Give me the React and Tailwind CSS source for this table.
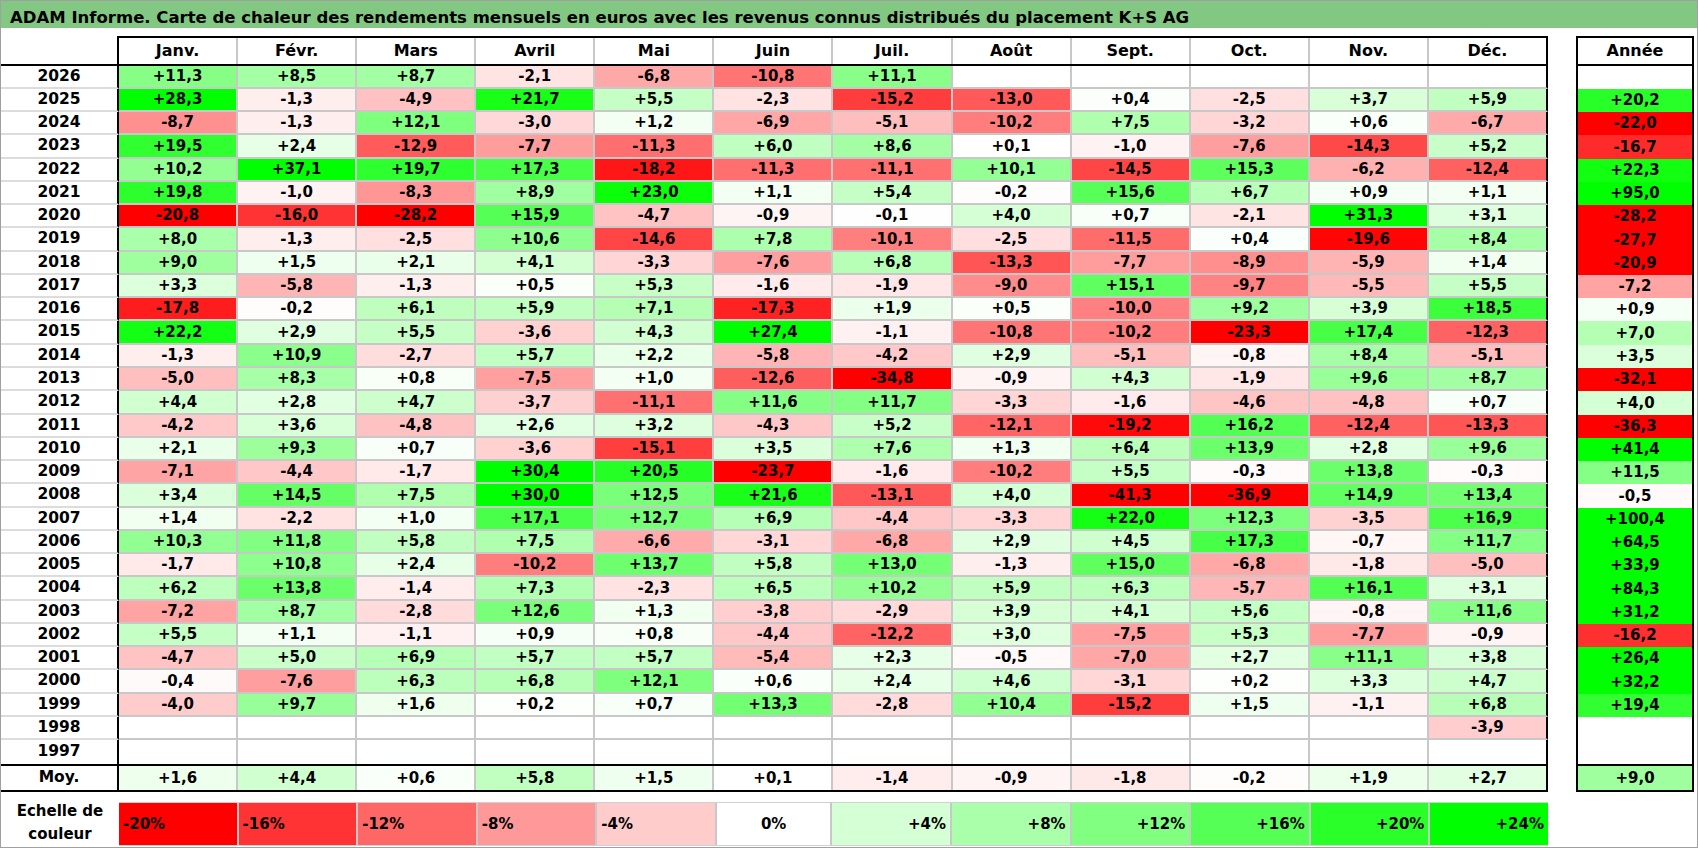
import React from 'react';

const MONTHS = ['Janv.', 'Févr.', 'Mars', 'Avril', 'Mai', 'Juin', 'Juil.', 'Août', 'Sept.', 'Oct.', 'Nov.', 'Déc.'];

// year, 12 monthly values ('.' = empty), yearly value
const ROWS = [
  ['2026', '+11,3 +8,5 +8,7 -2,1 -6,8 -10,8 +11,1 . . . . .', '.'],
  ['2025', '+28,3 -1,3 -4,9 +21,7 +5,5 -2,3 -15,2 -13,0 +0,4 -2,5 +3,7 +5,9', '+20,2'],
  ['2024', '-8,7 -1,3 +12,1 -3,0 +1,2 -6,9 -5,1 -10,2 +7,5 -3,2 +0,6 -6,7', '-22,0'],
  ['2023', '+19,5 +2,4 -12,9 -7,7 -11,3 +6,0 +8,6 +0,1 -1,0 -7,6 -14,3 +5,2', '-16,7'],
  ['2022', '+10,2 +37,1 +19,7 +17,3 -18,2 -11,3 -11,1 +10,1 -14,5 +15,3 -6,2 -12,4', '+22,3'],
  ['2021', '+19,8 -1,0 -8,3 +8,9 +23,0 +1,1 +5,4 -0,2 +15,6 +6,7 +0,9 +1,1', '+95,0'],
  ['2020', '-20,8 -16,0 -28,2 +15,9 -4,7 -0,9 -0,1 +4,0 +0,7 -2,1 +31,3 +3,1', '-28,2'],
  ['2019', '+8,0 -1,3 -2,5 +10,6 -14,6 +7,8 -10,1 -2,5 -11,5 +0,4 -19,6 +8,4', '-27,7'],
  ['2018', '+9,0 +1,5 +2,1 +4,1 -3,3 -7,6 +6,8 -13,3 -7,7 -8,9 -5,9 +1,4', '-20,9'],
  ['2017', '+3,3 -5,8 -1,3 +0,5 +5,3 -1,6 -1,9 -9,0 +15,1 -9,7 -5,5 +5,5', '-7,2'],
  ['2016', '-17,8 -0,2 +6,1 +5,9 +7,1 -17,3 +1,9 +0,5 -10,0 +9,2 +3,9 +18,5', '+0,9'],
  ['2015', '+22,2 +2,9 +5,5 -3,6 +4,3 +27,4 -1,1 -10,8 -10,2 -23,3 +17,4 -12,3', '+7,0'],
  ['2014', '-1,3 +10,9 -2,7 +5,7 +2,2 -5,8 -4,2 +2,9 -5,1 -0,8 +8,4 -5,1', '+3,5'],
  ['2013', '-5,0 +8,3 +0,8 -7,5 +1,0 -12,6 -34,8 -0,9 +4,3 -1,9 +9,6 +8,7', '-32,1'],
  ['2012', '+4,4 +2,8 +4,7 -3,7 -11,1 +11,6 +11,7 -3,3 -1,6 -4,6 -4,8 +0,7', '+4,0'],
  ['2011', '-4,2 +3,6 -4,8 +2,6 +3,2 -4,3 +5,2 -12,1 -19,2 +16,2 -12,4 -13,3', '-36,3'],
  ['2010', '+2,1 +9,3 +0,7 -3,6 -15,1 +3,5 +7,6 +1,3 +6,4 +13,9 +2,8 +9,6', '+41,4'],
  ['2009', '-7,1 -4,4 -1,7 +30,4 +20,5 -23,7 -1,6 -10,2 +5,5 -0,3 +13,8 -0,3', '+11,5'],
  ['2008', '+3,4 +14,5 +7,5 +30,0 +12,5 +21,6 -13,1 +4,0 -41,3 -36,9 +14,9 +13,4', '-0,5'],
  ['2007', '+1,4 -2,2 +1,0 +17,1 +12,7 +6,9 -4,4 -3,3 +22,0 +12,3 -3,5 +16,9', '+100,4'],
  ['2006', '+10,3 +11,8 +5,8 +7,5 -6,6 -3,1 -6,8 +2,9 +4,5 +17,3 -0,7 +11,7', '+64,5'],
  ['2005', '-1,7 +10,8 +2,4 -10,2 +13,7 +5,8 +13,0 -1,3 +15,0 -6,8 -1,8 -5,0', '+33,9'],
  ['2004', '+6,2 +13,8 -1,4 +7,3 -2,3 +6,5 +10,2 +5,9 +6,3 -5,7 +16,1 +3,1', '+84,3'],
  ['2003', '-7,2 +8,7 -2,8 +12,6 +1,3 -3,8 -2,9 +3,9 +4,1 +5,6 -0,8 +11,6', '+31,2'],
  ['2002', '+5,5 +1,1 -1,1 +0,9 +0,8 -4,4 -12,2 +3,0 -7,5 +5,3 -7,7 -0,9', '-16,2'],
  ['2001', '-4,7 +5,0 +6,9 +5,7 +5,7 -5,4 +2,3 -0,5 -7,0 +2,7 +11,1 +3,8', '+26,4'],
  ['2000', '-0,4 -7,6 +6,3 +6,8 +12,1 +0,6 +2,4 +4,6 -3,1 +0,2 +3,3 +4,7', '+32,2'],
  ['1999', '-4,0 +9,7 +1,6 +0,2 +0,7 +13,3 -2,8 +10,4 -15,2 +1,5 -1,1 +6,8', '+19,4'],
  ['1998', '. . . . . . . . . . . -3,9', '.'],
  ['1997', '. . . . . . . . . . . .', '.'],
];

const AVG = '+1,6 +4,4 +0,6 +5,8 +1,5 +0,1 -1,4 -0,9 -1,8 -0,2 +1,9 +2,7'.split(' ');
const AVG_YEAR = '+9,0';

const SCALE = [-20, -16, -12, -8, -4, 0, 4, 8, 12, 16, 20, 24];

// white -> red down to -20, white -> green up to +24
function heat(v) {
  if (v === null || Number.isNaN(v)) return '#ffffff';
  if (v < 0) {
    const c = Math.round(255 * (1 - Math.min(-v / 20, 1)));
    return `rgb(255,${c},${c})`;
  }
  const c = Math.round(255 * (1 - Math.min(v / 24, 1)));
  return `rgb(${c},255,${c})`;
}

const num = (s) => (s === '.' ? null : parseFloat(s.replace(',', '.')));

// 30 rows share 698px, some get 24px and the rest 23px
const rowH = (i) =>
  Math.floor(((i + 1) * 698) / 30) - Math.floor((i * 698) / 30) === 24 ? 'h-[24px]' : 'h-[23px]';

function Cell({ value, last, bottom }) {
  return (
    <div
      className={`flex-1 flex items-center justify-center text-[15px] ${
        last ? 'border-r-2 border-r-black' : 'border-r-2 border-r-[#c8c8c8]'
      } ${bottom ? 'border-b-2 border-b-[#c8c8c8]' : ''}`}
      style={{ backgroundColor: heat(num(value)) }}
    >
      {value === '.' ? '' : value}
    </div>
  );
}

export default function App() {
  return (
    <div className="w-[1698px] h-[848px] border border-[#a0a0a0] bg-white text-black font-bold [font-family:'DejaVu_Sans','Liberation_Sans',sans-serif] flex flex-col">
      <div className="h-[27px] bg-[#82c882] pl-[9px] pt-[9px] text-[16.5px] leading-[16px] whitespace-nowrap">
        ADAM Informe. Carte de chaleur des rendements mensuels en euros avec les revenus connus distribués du placement K+S AG
      </div>

      <div className="flex mt-[8px]">
        {/* monthly table */}
        <div className="w-[1547px] flex flex-col">
          <div className="flex h-[30px] border-b-2 border-black">
            <div className="w-[118px] border-r-2 border-black" />
            <div className="flex flex-1 border-t-2 border-r-2 border-black">
              {MONTHS.map((m, i) => (
                <div
                  key={m}
                  className={`flex-1 flex items-center justify-center text-[16px] ${
                    i < 11 ? 'border-r-2 border-[#c8c8c8]' : ''
                  }`}
                >
                  {m}
                </div>
              ))}
            </div>
          </div>

          {ROWS.map(([year, vals], i) => {
            const cells = vals.split(' ');
            const bottom = i < ROWS.length - 1;
            return (
              <div key={year} className={`flex ${rowH(i)}`}>
                <div
                  className={`w-[118px] flex items-center justify-center text-[15.5px] border-r-2 border-r-black ${
                    bottom ? 'border-b-2 border-b-[#dcdcdc]' : ''
                  }`}
                >
                  {year}
                </div>
                {cells.map((c, j) => (
                  <Cell key={j} value={c} last={j === 11} bottom={bottom} />
                ))}
              </div>
            );
          })}

          <div className="flex h-[28px] border-t-2 border-b-2 border-black">
            <div className="w-[118px] flex items-center justify-center text-[15.5px] border-r-2 border-black">
              Moy.
            </div>
            {AVG.map((c, j) => (
              <Cell key={j} value={c} last={j === 11} />
            ))}
          </div>
        </div>

        {/* yearly column */}
        <div className="ml-[28px] w-[118px] border-2 border-black flex flex-col">
          <div className="h-[28px] border-b-2 border-black flex items-center justify-center text-[16px]">
            Année
          </div>
          {ROWS.map(([year, , total], i) => (
            <div
              key={year}
              className={`${rowH(i)} flex items-center justify-center text-[15px]`}
              style={{ backgroundColor: heat(num(total)) }}
            >
              {total === '.' ? '' : total}
            </div>
          ))}
          <div
            className="h-[26px] border-t-2 border-black flex items-center justify-center text-[15px]"
            style={{ backgroundColor: heat(num(AVG_YEAR)) }}
          >
            {AVG_YEAR}
          </div>
        </div>
      </div>

      {/* colour scale */}
      <div className="flex mt-[10px] h-[44px]">
        <div className="w-[118px] flex flex-col items-center justify-center text-[15px] leading-[23px] -mt-[2px]">
          <span>Echelle de</span>
          <span>couleur</span>
        </div>
        <div className="w-[1429px] flex border-t border-b border-[#d0d0d0]">
          {SCALE.map((s, i) => (
            <div
              key={s}
              className={`flex-1 flex items-center text-[15px] ${
                s < 0 ? 'justify-start pl-[4px]' : s === 0 ? 'justify-center' : 'justify-end pr-[4px]'
              } ${i < 11 ? 'border-r-2 border-[#c8c8c8]' : ''}`}
              style={{ backgroundColor: heat(s) }}
            >
              {s > 0 ? `+${s}%` : `${s}%`}
            </div>
          ))}
        </div>
      </div>
    </div>
  );
}
